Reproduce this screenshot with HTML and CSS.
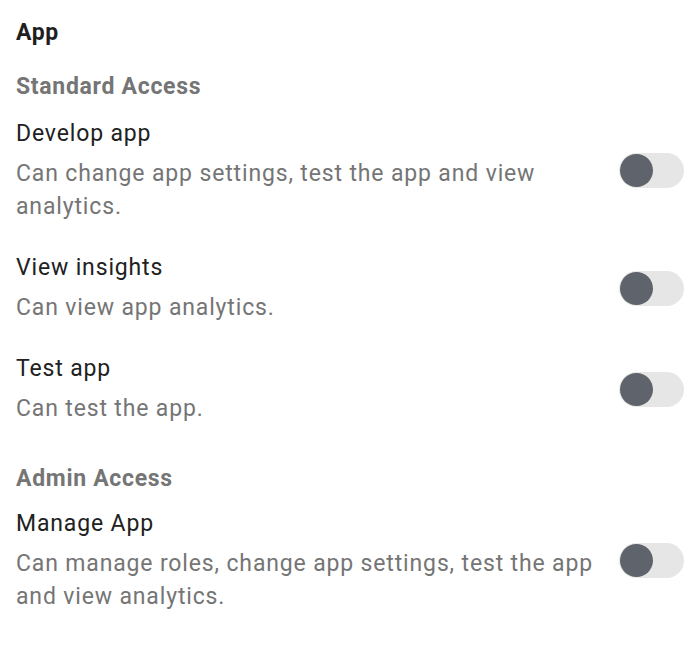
FILE: index.html
```html
<!DOCTYPE html>
<html lang="en">
<head>
<meta charset="utf-8">
<title>App permissions</title>
<link rel="stylesheet" href="styles.css">
</head>
<body>
<div class="page">
  <h1 class="app-title">App</h1>

  <h2 class="section-title">Standard Access</h2>
  <div class="row">
    <div class="row-text">
      <div class="row-title">Develop app</div>
      <div class="row-desc">Can change app settings, test the app and view analytics.</div>
    </div>
    <span class="toggle"><span class="thumb"></span></span>
  </div>
  <div class="row">
    <div class="row-text">
      <div class="row-title">View insights</div>
      <div class="row-desc">Can view app analytics.</div>
    </div>
    <span class="toggle"><span class="thumb"></span></span>
  </div>
  <div class="row">
    <div class="row-text">
      <div class="row-title">Test app</div>
      <div class="row-desc">Can test the app.</div>
    </div>
    <span class="toggle"><span class="thumb"></span></span>
  </div>

  <h2 class="section-title admin">Admin Access</h2>
  <div class="row">
    <div class="row-text">
      <div class="row-title">Manage App</div>
      <div class="row-desc">Can manage roles, change app settings, test the app and view analytics.</div>
    </div>
    <span class="toggle"><span class="thumb"></span></span>
  </div>
</div>
</body>
</html>
```

FILE: styles.css
```css
html, body {
  margin: 0;
  padding: 0;
  background: #ffffff;
}

body {
  font-family: Roboto, "Liberation Sans", Arial, sans-serif;
  color: #212121;
}

.page {
  padding: 17px 16px 0 16px;
  display: flex;
  flex-direction: column;
}

.app-title {
  margin: 0;
  font-size: 23px;
  line-height: 32px;
  font-weight: 700;
  letter-spacing: 0.6px;
  color: #1f1f1f;
}

.section-title {
  margin: 22px 0 15px 0;
  font-size: 23px;
  line-height: 32px;
  font-weight: 700;
  letter-spacing: 0.7px;
  color: #757575;
}

.section-title.admin {
  margin-top: 9px;
  margin-bottom: 13px;
}

.row {
  display: flex;
  align-items: center;
  gap: 24px;
  margin-bottom: 29px;
}

.row:last-child {
  margin-bottom: 0;
}

.row-text {
  flex: 1;
  display: flex;
  flex-direction: column;
  gap: 7px;
}

.row-title {
  font-size: 23px;
  line-height: 32px;
  letter-spacing: 0.85px;
  color: #212121;
}

.row-desc {
  font-size: 23px;
  line-height: 33px;
  letter-spacing: 0.85px;
  color: #757575;
}

.toggle {
  flex: none;
  width: 65px;
  height: 35px;
  border-radius: 18px;
  background: #e6e6e6;
  display: flex;
  align-items: center;
  padding: 0 1px;
  box-sizing: border-box;
}

.thumb {
  width: 33px;
  height: 33px;
  border-radius: 50%;
  background: #5f636b;
}
```
